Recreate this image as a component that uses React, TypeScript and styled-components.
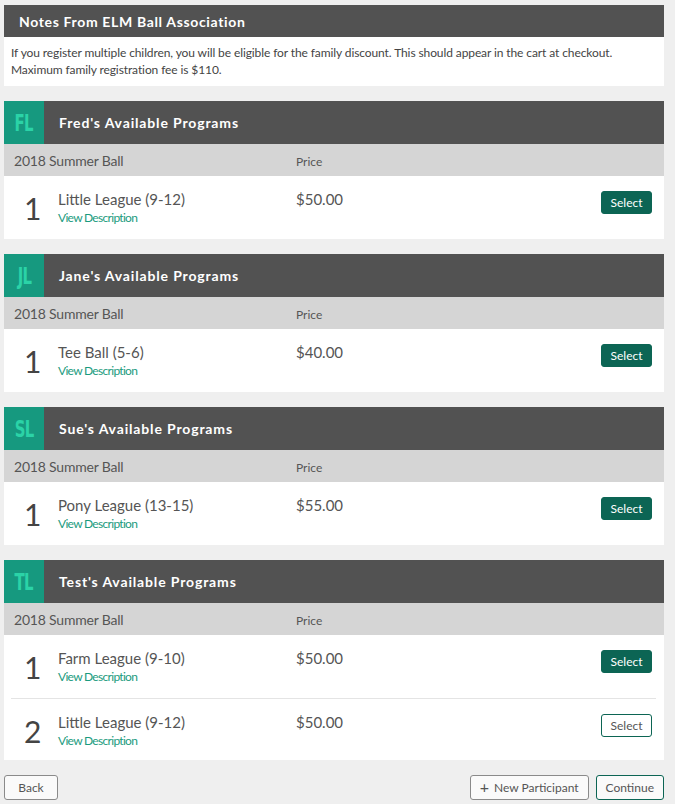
import styled, { createGlobalStyle } from "styled-components";

const GlobalStyle = createGlobalStyle`
  html, body {
    margin: 0;
    padding: 0;
    background: #efefef;
    font-family: Lato, "Open Sans", sans-serif;
    color: #555;
  }
  * {
    box-sizing: border-box;
  }
`;

const Page = styled.div`
  width: 675px;
  padding: 5px 11px 6px 4px;
  display: flex;
  flex-direction: column;
  gap: 15px;
`;

const Card = styled.div`
  background: #fff;
`;

const NotesTitle = styled.div`
  height: 32px;
  background: #525252;
  color: #fff;
  font-weight: 700;
  font-size: 14px;
  letter-spacing: 0.65px;
  display: flex;
  align-items: center;
  padding-left: 15px;
`;

const NotesBody = styled.div`
  padding: 7px 7px 8px;
  font-size: 12px;
  line-height: 17px;
  color: #444;
  letter-spacing: -0.1px;
`;

const CardHeader = styled.div`
  height: 43px;
  background: #525252;
  display: flex;
  align-items: center;
`;

const Avatar = styled.div`
  width: 40px;
  height: 43px;
  background: #16997f;
  color: #2bd3a7;
  font-family: "DejaVu Sans Condensed", "Liberation Sans Narrow", sans-serif;
  font-weight: 700;
  font-size: 23px;
  display: flex;
  align-items: center;
  justify-content: center;
  letter-spacing: -1px;
`;

const AvatarText = styled.span`
  display: inline-block;
  transform: scaleX(0.72);
`;

const CardTitle = styled.div`
  color: #fff;
  font-weight: 700;
  font-size: 14px;
  letter-spacing: 0.85px;
  margin-left: 15px;
`;

const SubHeader = styled.div`
  height: 32px;
  background: #d5d5d5;
  display: grid;
  grid-template-columns: 282px 1fr;
  align-items: center;
  padding-left: 10px;
`;

const Season = styled.div`
  font-size: 14px;
  color: #555;
  letter-spacing: -0.2px;
`;

const PriceLabel = styled.div`
  font-size: 12px;
  color: #555;
  padding-top: 2px;
`;

const Rows = styled.div`
  padding: 0 8px 0 7px;
`;

const Row = styled.div<{ $divided?: boolean }>`
  height: ${(p) => (p.$divided ? "62px" : "63px")};
  display: grid;
  grid-template-columns: 47px 238px 1fr auto;
  align-items: start;
  border-top: ${(p) => (p.$divided ? "1px solid #e4e4e4" : "none")};
  padding: 0 4px 0 0;
`;

const Index = styled.div`
  font-size: 30px;
  color: #444;
  line-height: 1;
  padding: 17px 0 0 13px;
`;

const Info = styled.div`
  padding-top: 14px;
  display: flex;
  flex-direction: column;
  gap: 2px;
`;

const ProgramName = styled.div`
  font-size: 15px;
  line-height: 18px;
  color: #555;
`;

const DescLink = styled.a`
  font-size: 12px;
  line-height: 15px;
  color: #1b9b7e;
  letter-spacing: -0.7px;
  text-decoration: none;
  cursor: pointer;
`;

const Price = styled.div`
  font-size: 15px;
  line-height: 18px;
  color: #555;
  padding-top: 14px;
`;

const SelectButton = styled.button<{ $outline?: boolean }>`
  margin-top: 15px;
  width: 51px;
  height: 23px;
  border-radius: 3px;
  font-family: Lato, sans-serif;
  font-size: 12px;
  padding: 0;
  cursor: pointer;
  background: ${(p) => (p.$outline ? "#fff" : "#0c6554")};
  color: ${(p) => (p.$outline ? "#555" : "#fff")};
  border: 1px solid #0c6554;
`;

const Footer = styled.div`
  display: flex;
  align-items: center;
  gap: 7px;
`;

const FooterButton = styled.button<{ $accent?: boolean; $wide?: boolean }>`
  height: 25px;
  min-width: ${(p) => (p.$wide ? "54px" : "0")};
  padding: 0 9px;
  font-family: Lato, sans-serif;
  font-size: 12px;
  color: #555;
  background: #fafafa;
  border-radius: 3px;
  border: 1px solid ${(p) => (p.$accent ? "#0c6554" : "#8a8a8a")};
  cursor: pointer;
  display: flex;
  align-items: center;
  justify-content: center;
  gap: 5px;
`;

const Spacer = styled.div`
  flex: 1;
`;

const Plus = styled.span`
  font-size: 16px;
  line-height: 1;
  margin-top: -2px;
`;

type Program = { name: string; price: string };
type Participant = { initials: string; name: string; programs: Program[] };

const participants: Participant[] = [
  { initials: "FL", name: "Fred", programs: [{ name: "Little League (9-12)", price: "$50.00" }] },
  { initials: "JL", name: "Jane", programs: [{ name: "Tee Ball (5-6)", price: "$40.00" }] },
  { initials: "SL", name: "Sue", programs: [{ name: "Pony League (13-15)", price: "$55.00" }] },
  {
    initials: "TL",
    name: "Test",
    programs: [
      { name: "Farm League (9-10)", price: "$50.00" },
      { name: "Little League (9-12)", price: "$50.00" },
    ],
  },
];

const ParticipantCard = ({ p }: { p: Participant }) => (
  <Card>
    <CardHeader>
      <Avatar>
        <AvatarText>{p.initials}</AvatarText>
      </Avatar>
      <CardTitle>{p.name}'s Available Programs</CardTitle>
    </CardHeader>
    <SubHeader>
      <Season>2018 Summer Ball</Season>
      <PriceLabel>Price</PriceLabel>
    </SubHeader>
    <Rows>
      {p.programs.map((prog, i) => (
        <Row key={prog.name} $divided={i > 0}>
          <Index>{i + 1}</Index>
          <Info>
            <ProgramName>{prog.name}</ProgramName>
            <DescLink>View Description</DescLink>
          </Info>
          <Price>{prog.price}</Price>
          {/* the last one in the reference is shown unfilled */}
          <SelectButton $outline={i === 1}>Select</SelectButton>
        </Row>
      ))}
    </Rows>
  </Card>
);

const App = () => (
  <>
    <GlobalStyle />
    <Page>
      <Card>
        <NotesTitle>Notes From ELM Ball Association</NotesTitle>
        <NotesBody>
          If you register multiple children, you will be eligible for the family discount. This
          should appear in the cart at checkout.
          <br />
          Maximum family registration fee is $110.
        </NotesBody>
      </Card>
      {participants.map((p) => (
        <ParticipantCard key={p.initials} p={p} />
      ))}
      <Footer>
        <FooterButton $wide>Back</FooterButton>
        <Spacer />
        <FooterButton>
          <Plus>+</Plus>New Participant
        </FooterButton>
        <FooterButton $accent>Continue</FooterButton>
      </Footer>
    </Page>
  </>
);

export default App;
